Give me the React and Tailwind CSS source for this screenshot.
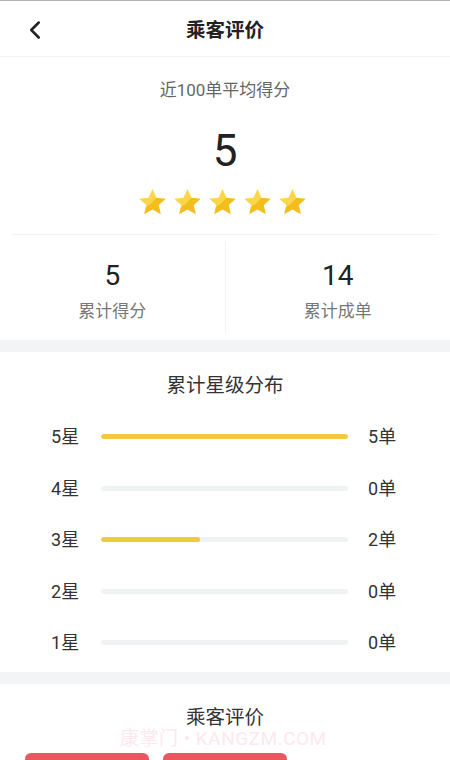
import { ChevronLeft } from 'lucide-react'

const rows = [
  { star: 5, count: 5 },
  { star: 4, count: 0 },
  { star: 3, count: 2 },
  { star: 2, count: 0 },
  { star: 1, count: 0 },
]

const Star = ({ id }) => (
  <svg width="29" height="28" viewBox="0 0 24 23">
    <defs>
      <linearGradient id={id} x1="0" y1="0" x2="1" y2="1">
        <stop offset="0.5" stopColor="#fcd64a" />
        <stop offset="0.5" stopColor="#f4bd1e" />
      </linearGradient>
    </defs>
    <polygon
      points="12,0.8 15.3,7.9 23,8.8 17.2,14 18.9,21.7 12,17.7 5.1,21.7 6.8,14 1,8.8 8.7,7.9"
      fill={`url(#${id})`}
    />
  </svg>
)

export default function App() {
  const max = 5
  return (
    <div className="w-[450px] h-[760px] overflow-hidden bg-white text-[#333] relative" style={{ fontFamily: "Roboto, 'Noto Sans CJK SC', sans-serif" }}>
      <div className="h-px bg-[#b3b3b3]" />
      <header className="h-[56px] pt-[4px] flex items-center justify-center relative border-b border-[#f3f3f3]">
        <ChevronLeft size={30} strokeWidth={2} className="absolute left-[20px] top-[14px] text-[#222]" />
        <h1 className="text-[19.5px] font-bold text-[#222]">乘客评价</h1>
      </header>

      <section className="flex flex-col items-center">
        <p className="mt-[21px] text-[17px] leading-[24px] text-[#666]">近100单平均得分</p>
        <p className="mt-[23px] text-[44px] leading-[52px] text-[#222]">5</p>
        <div className="mt-[11px] mr-[5px] flex gap-[6px] h-[28px]">
          {[0, 1, 2, 3, 4].map((i) => <Star key={i} id={`s${i}`} />)}
        </div>
        <div className="mt-[18px] h-px w-[426px] bg-[#f3f3f3]" />
        <div className="w-full h-[105px] flex">
          <div className="flex-1 flex flex-col items-center pt-[25px]">
            <span className="text-[28px] leading-[32px] text-[#222]">5</span>
            <span className="mt-[7px] text-[17px] leading-[24px] text-[#777]">累计得分</span>
          </div>
          <div className="w-px my-[7px] bg-[#f3f3f3]" />
          <div className="flex-1 flex flex-col items-center pt-[25px]">
            <span className="text-[28px] leading-[32px] text-[#222]">14</span>
            <span className="mt-[7px] text-[17px] leading-[24px] text-[#777]">累计成单</span>
          </div>
        </div>
      </section>

      <div className="h-[12px] bg-[#f2f4f5]" />

      <section className="pt-[20px] pb-[3px]">
        <h2 className="text-center text-[19.5px] leading-[28px] text-[#333]">累计星级分布</h2>
        <div className="mt-[11px]">
          {rows.map((r) => (
            <div key={r.star} className="h-[51.5px] flex items-center pl-[51px] text-[18px] text-[#333]">
              <span className="w-[50px]">{r.star}星</span>
              <div className="w-[247px] h-[5px] rounded-full bg-[#f0f3f3] overflow-hidden">
                <div className="h-full rounded-full bg-[#f3c93d]" style={{ width: `${(r.count / max) * 100}%` }} />
              </div>
              <span className="ml-[20px]">{r.count}单</span>
            </div>
          ))}
        </div>
      </section>

      <div className="h-[12px] bg-[#f2f4f5]" />

      <section className="pt-[21px] relative">
        <h2 className="text-center text-[19.5px] leading-[26px] text-[#333]">乘客评价</h2>
        <div className="mt-[22px] flex gap-[14px] pl-[25px]">
          <div className="w-[124px] h-[30px] rounded-md bg-[#e9575f]" />
          <div className="w-[124px] h-[30px] rounded-md bg-[#e9575f]" />
        </div>
        <span className="absolute left-[120px] top-[47px] text-[19px] leading-[16px] text-[#fde8f0] tracking-[0.5px]">康掌门 • KANGZM.COM</span>
      </section>
    </div>
  )
}
